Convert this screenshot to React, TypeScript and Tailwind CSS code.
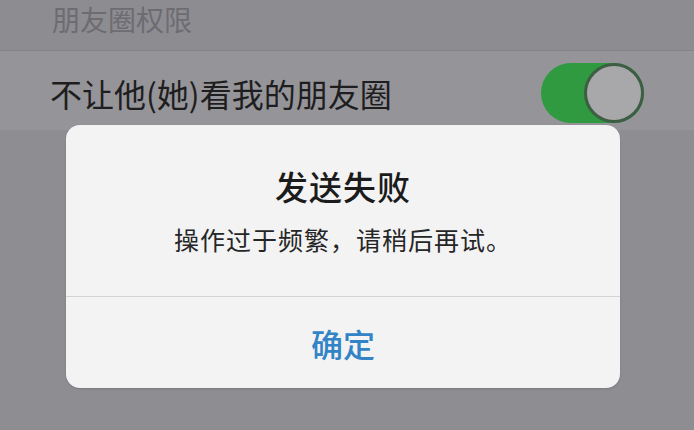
export default function App() {
  return (
    <div
      className="flex h-[430px] w-[694px] flex-col overflow-hidden bg-[#8e8d92]"
      style={{ fontFamily: '"Noto Sans CJK SC", "Noto Sans", sans-serif' }}
    >
      {/* section header */}
      <div className="flex h-[50px] shrink-0 items-end bg-[#8d8c91] pb-[14px] pl-[52px]">
        <span className="text-[28px] leading-[34px] text-[#6d6c71]">朋友圈权限</span>
      </div>

      {/* setting row */}
      <div className="flex h-[80px] shrink-0 items-center justify-between border-t border-[#858489] bg-[#959499] pl-[50px] pr-[50px]">
        <span className="mt-[4px] text-[32px] leading-[40px] text-[#1e1e1f]">不让他(她)看我的朋友圈</span>
        <div className="mt-[4px] flex h-[60px] w-[103px] items-center justify-end rounded-full bg-[#2f9a3f]">
          <div className="h-[60px] w-[60px] rounded-full border-[3px] border-[#3d5e42] bg-[#a8a8ab]" />
        </div>
      </div>

      {/* alert dialog */}
      <div className="-mt-[5px] ml-[66px] flex w-[554px] flex-col rounded-[14px] bg-[#f3f3f4] shadow-[0_1px_2px_rgba(0,0,0,0.15)]">
        <div className="flex flex-col items-center pb-[40px] pt-[42px]">
          <div className="text-[33px] font-medium leading-[38px] tracking-[1px] text-[#1b1b1b]">发送失败</div>
          <div className="mt-[17px] text-[25px] leading-[34px] tracking-[1px] text-[#262626]">操作过于频繁，请稍后再试。</div>
        </div>
        <div className="h-px bg-[#d3d3d6]" />
        <div className="flex h-[91px] items-center justify-center">
          <span className="text-[32px] font-medium leading-[40px] text-[#3284c6]">确定</span>
        </div>
      </div>
    </div>
  )
}
